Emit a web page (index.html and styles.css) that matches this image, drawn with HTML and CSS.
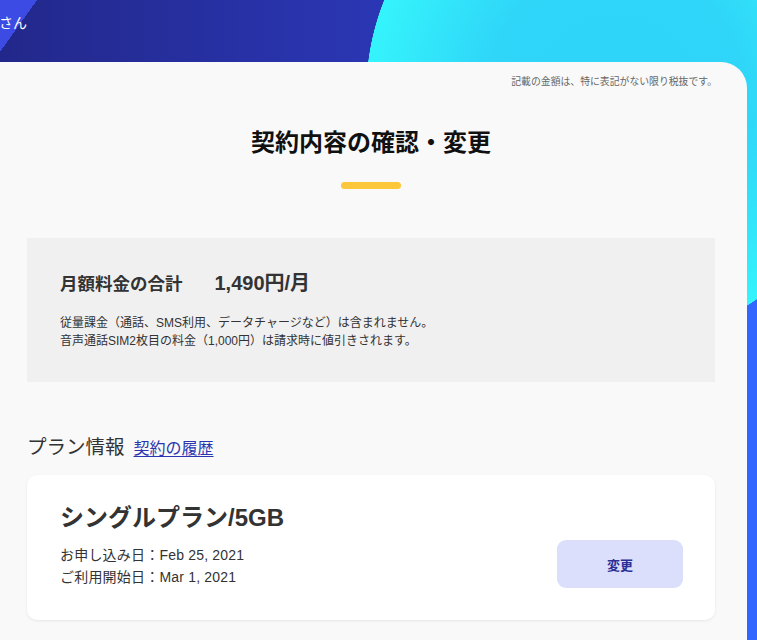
FILE: index.html
```html
<!DOCTYPE html>
<html lang="ja">
<head>
<meta charset="utf-8">
<title>契約内容の確認・変更</title>
<link rel="stylesheet" href="styles.css">
</head>
<body>
<header class="top">
  <span class="greet">さん</span>
</header>
<main class="panel">
  <p class="note">記載の金額は、特に表記がない限り税抜です。</p>
  <h1 class="title">契約内容の確認・変更</h1>
  <div class="title-bar"></div>

  <section class="summary">
    <div class="summary-head">
      <span class="summary-label">月額料金の合計</span>
      <span class="summary-price">1,490円/月</span>
    </div>
    <p class="summary-desc">従量課金（通話、SMS利用、データチャージなど）は含まれません。<br>音声通話SIM2枚目の料金（1,000円）は請求時に値引きされます。</p>
  </section>

  <div class="section-head">
    <h2 class="section-title">プラン情報</h2>
    <a class="history-link" href="#">契約の履歴</a>
  </div>

  <section class="plan-card">
    <div class="plan-info">
      <h3 class="plan-name">シングルプラン/5GB</h3>
      <p class="plan-dates">お申し込み日：Feb 25, 2021<br>ご利用開始日：Mar 1, 2021</p>
    </div>
    <button class="change-btn" type="button">変更</button>
  </section>
</main>
</body>
</html>
```

FILE: styles.css
```css
html, body {
  margin: 0;
  padding: 0;
}

body {
  width: 757px;
  min-height: 640px;
  font-family: "Liberation Sans", "Noto Sans CJK JP", sans-serif;
  color: #333;
  background-color: #3366ff;
  background-image:
    linear-gradient(to bottom right, #3b4be3 50%, rgba(59, 75, 227, 0) 50%),
    radial-gradient(circle 250px at 616px 93px, #2fd4f8 0, #2fd6f8 130px, #35f4fc 249.5px, rgba(53, 244, 252, 0) 250px),
    linear-gradient(90deg, #22288a 0, #2b36b4 380px);
  background-size: 37px 52px, 100% 100%, 100% 62px;
  background-position: 0 0, 0 0, 0 0;
  background-repeat: no-repeat;
  overflow: hidden;
}

.top {
  height: 62px;
  display: flex;
  align-items: flex-start;
}

.greet {
  display: block;
  margin-top: 15px;
  margin-left: -1px;
  font-size: 14px;
  line-height: 16px;
  color: #fff;
}

.panel {
  display: flex;
  flex-direction: column;
  width: 747px;
  box-sizing: border-box;
  min-height: 578px;
  padding: 13px 32px 40px 27px;
  background: #f9f9f9;
  border-top-right-radius: 26px;
}

.note {
  margin: 0 -2px 0 0;
  text-align: right;
  font-size: 9.85px;
  line-height: 14px;
  color: #666;
}

.title {
  margin: 38px 0 0;
  text-align: center;
  font-size: 24px;
  line-height: 32px;
  font-weight: 700;
  color: #111;
}

.title-bar {
  align-self: center;
  width: 60px;
  height: 7px;
  margin-top: 23px;
  border-radius: 4px;
  background: #fcc73a;
}

.summary {
  margin-top: 49px;
  padding: 33px 33px 32px;
  background: #f0f0f0;
}

.summary-head {
  display: flex;
  align-items: baseline;
  gap: 32px;
  line-height: 24px;
  font-weight: 700;
  color: #333;
}

.summary-label {
  font-size: 17.5px;
}

.summary-price {
  font-size: 20px;
}

.summary-desc {
  margin: 18px 0 0;
  font-size: 12px;
  line-height: 18px;
  color: #333;
}

.section-head {
  display: flex;
  align-items: baseline;
  gap: 9px;
  margin-top: 51px;
}

.section-title {
  margin: 0;
  font-size: 19.5px;
  line-height: 28px;
  font-weight: 400;
  color: #333;
}

.history-link {
  font-size: 16px;
  line-height: 28px;
  color: #2b35b0;
  text-decoration: underline;
  text-underline-offset: 2px;
}

.plan-card {
  display: flex;
  justify-content: space-between;
  align-items: flex-end;
  margin-top: 12px;
  padding: 27px 32px 32px 33px;
  background: #fff;
  border-radius: 10px;
  box-shadow: 0 1px 3px rgba(0, 0, 0, 0.08);
}

.plan-name {
  margin: 0;
  font-size: 24px;
  line-height: 32px;
  font-weight: 700;
  color: #333;
}

.plan-dates {
  margin: 10px 0 0;
  font-size: 14px;
  line-height: 22px;
  letter-spacing: 0.2px;
  color: #333;
}

.change-btn {
  width: 126px;
  height: 48px;
  border: none;
  border-radius: 9px;
  background: #dbdffb;
  color: #2b2f96;
  font-family: "Noto Sans CJK JP", sans-serif;
  font-size: 13px;
  font-weight: 700;
  cursor: pointer;
}
```
